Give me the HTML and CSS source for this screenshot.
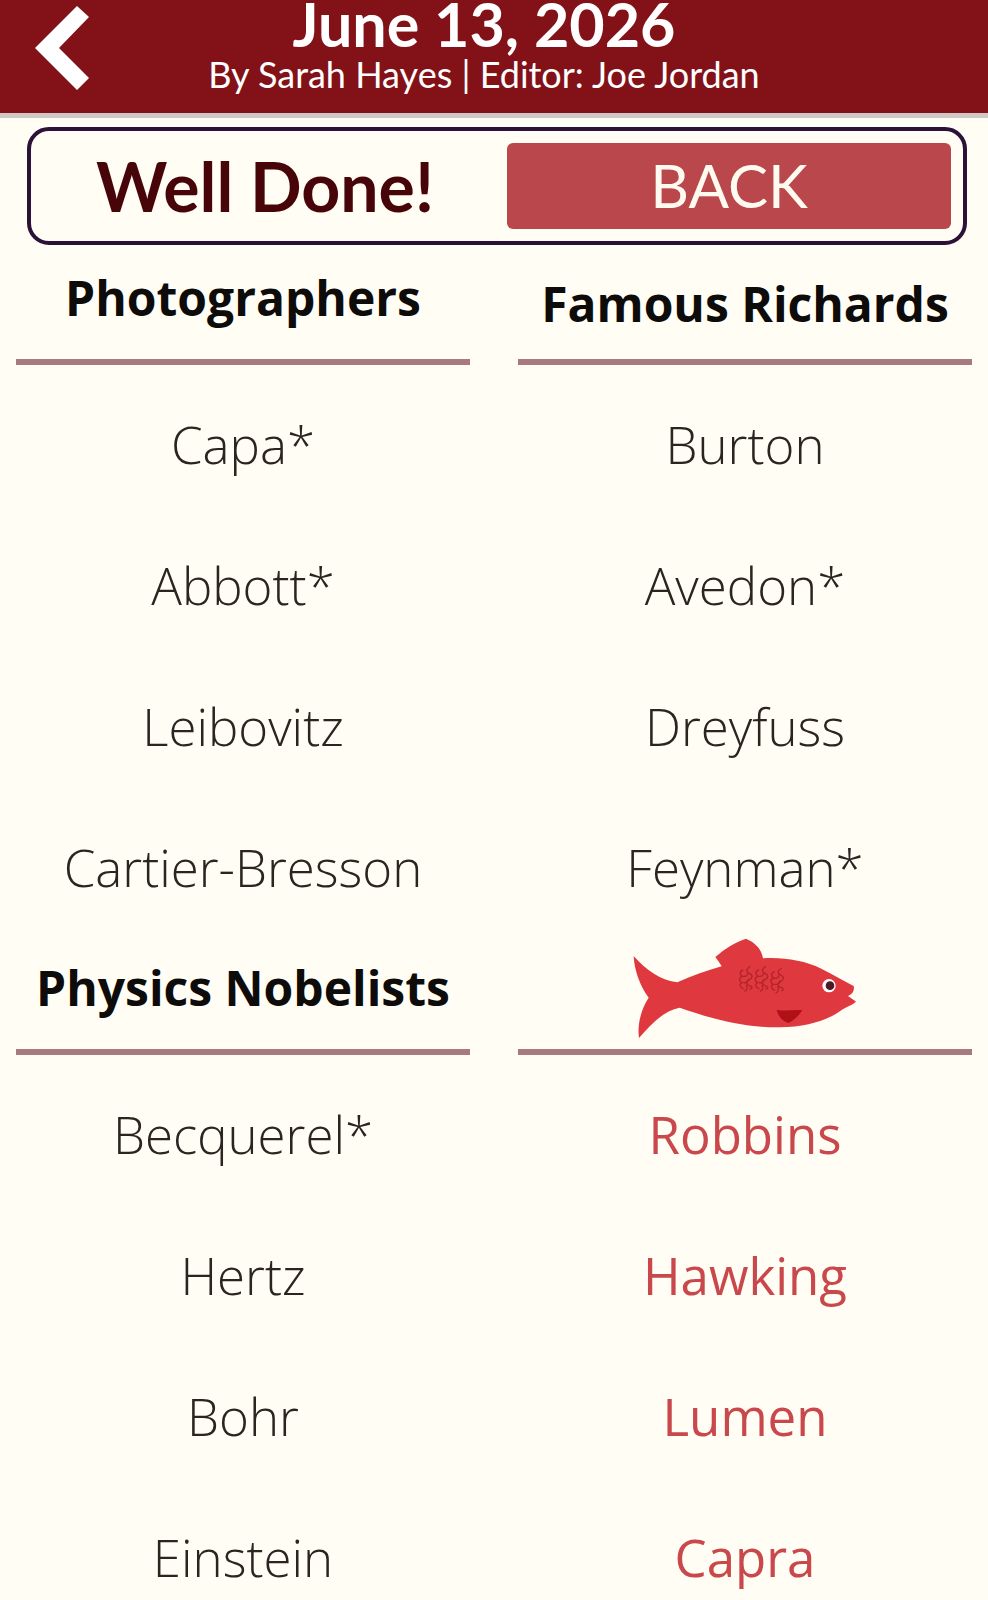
FILE: index.html
```html
<!DOCTYPE html>
<html lang="en">
<head>
<meta charset="utf-8">
<meta name="viewport" content="width=device-width, initial-scale=1">
<title>June 13, 2026</title>
<link rel="stylesheet" href="styles.css">
</head>
<body>
<header class="topbar">
  <button class="nav-back" type="button" aria-label="Previous page">
    <svg class="chevron" viewBox="0 0 54 84" aria-hidden="true"><path d="M42 0 54 11 24 42 54 72 42 84 0 42Z" fill="#fff"/></svg>
  </button>
  <div class="titles">
    <h1 class="date">June 13, 2026</h1>
    <p class="byline">By Sarah Hayes | Editor: Joe Jordan</p>
  </div>
</header>
<main>
  <section class="banner">
    <p class="result">Well Done!</p>
    <button class="back" type="button">BACK</button>
  </section>
  <div class="groups">
    <section class="group">
      <h2 class="group-title">Photographers</h2>
      <ul class="items"><li>Capa*</li><li>Abbott*</li><li>Leibovitz</li><li>Cartier-Bresson</li></ul>
    </section>
    <section class="group">
      <h2 class="group-title low">Famous Richards</h2>
      <ul class="items"><li>Burton</li><li>Avedon*</li><li>Dreyfuss</li><li>Feynman*</li></ul>
    </section>
    <section class="group">
      <h2 class="group-title">Physics Nobelists</h2>
      <ul class="items"><li>Becquerel*</li><li>Hertz</li><li>Bohr</li><li>Einstein</li></ul>
    </section>
    <section class="group herring">
      <h2 class="group-title">
        <svg class="fish" viewBox="40 40 672 303" role="img" aria-label="Red herring">
          <path fill="#e0383f" d="M42 94C78 136 125 168 173 173C215 154 260 138 306 125C301 115 293 106 287 97C314 73 346 53 379 42C404 52 426 72 430 101C490 97 553 107 605 132C641 149 672 169 702 184C705 196 700 207 685 214C694 221 702 225 709 231C696 242 681 246 667 255C625 287 560 307 480 308C370 310 270 280 180 249C130 258 91 303 58 340C52 300 65 252 87 219C60 182 44 136 42 94Z"/>
          <path fill="#b01018" d="M471 255C497 261 522 254 548 256C538 273 520 289 507 295C490 291 476 277 471 255Z"/>
          <g fill="none" stroke="#b3242c" stroke-width="4">
            <path id="scale" d="M371 136c-12 3-12 15-2 19c-12 3-12 15-2 19c-9 4-7 15 5 18M392 125c-13 6-14 17-3 21c12 5 10 15 0 19c-12 4-10 15 0 18c12 4 9 10 1 10M371 155q14 2 14-13M371 174q16 2 16-12M374 200q12-4 6-20"/>
            <use href="#scale" x="47"/>
            <use href="#scale" x="94" y="5"/>
          </g>
          <circle cx="628" cy="183" r="20" fill="#fff"/>
          <circle cx="631" cy="183" r="13" fill="#4b1a24"/>
        </svg>
      </h2>
      <ul class="items"><li>Robbins</li><li>Hawking</li><li>Lumen</li><li>Capra</li></ul>
    </section>
  </div>
</main>
</body>
</html>
```
FILE: styles.css
```css
* { box-sizing: border-box; }
body {
  margin: 0;
  background: #fffdf4;
  color: #2b2522;
  font-family: "Open Sans", sans-serif;
}
h1, h2, p, ul { margin: 0; padding: 0; font-weight: inherit; }
button { border: 0; padding: 0; font: inherit; color: inherit; cursor: pointer; }
.topbar {
  display: grid;
  grid-template-columns: 92px 1fr 112px;
  align-items: start;
  border-bottom: 5px solid #cfc8c4;
  background: #821218;
  color: #fff;
  font-family: Lato, sans-serif;
}
.nav-back { justify-self: end; padding-top: 6px; background: none; margin-right: 3px; }
.chevron { display: block; width: 54px; height: 84px; }
.titles { padding-bottom: 13px; text-align: center; white-space: nowrap; }
.date { font-size: 61px; line-height: 48px; font-weight: 700; }
.byline { font-size: 36px; line-height: 52px; }
.banner {
  display: grid;
  grid-template-columns: 1fr 1fr;
  gap: 20px;
  margin: 9px 21px 0 27px;
  padding: 12px;
  border: 4px solid #2b1239;
  border-radius: 22px;
  font-family: Lato, sans-serif;
}
.result { text-align: center; font-size: 68px; line-height: 86px; font-weight: 700; color: #470509; }
.back { border-radius: 6px; background: #b9474b; color: #fffaf0; font-size: 60px; line-height: 84px; padding-bottom: 2px; }
.groups {
  display: grid;
  grid-template-columns: 1fr 1fr;
  column-gap: 48px;
  padding: 5px 16px 0;
}
.group-title {
  display: flex;
  justify-content: center;
  height: 115px;
  padding-top: 16px;
  border-bottom: 6px solid #a77a7e;
  font-size: 48px;
  line-height: 64px;
  font-weight: 700;
  color: #0d0c0a;
  white-space: nowrap;
}
.low { padding-top: 22px; }
.herring .group-title { align-items: end; padding: 0 0 10px; }
.fish { display: block; width: 224px; height: 101px; }
.items {
  list-style: none;
  padding: 9px 0 2px;
  text-align: center;
  font-size: 51px;
  line-height: 141px;
  font-weight: 300;
}
.herring .items { font-weight: 400; color: #c9484c; }
```
